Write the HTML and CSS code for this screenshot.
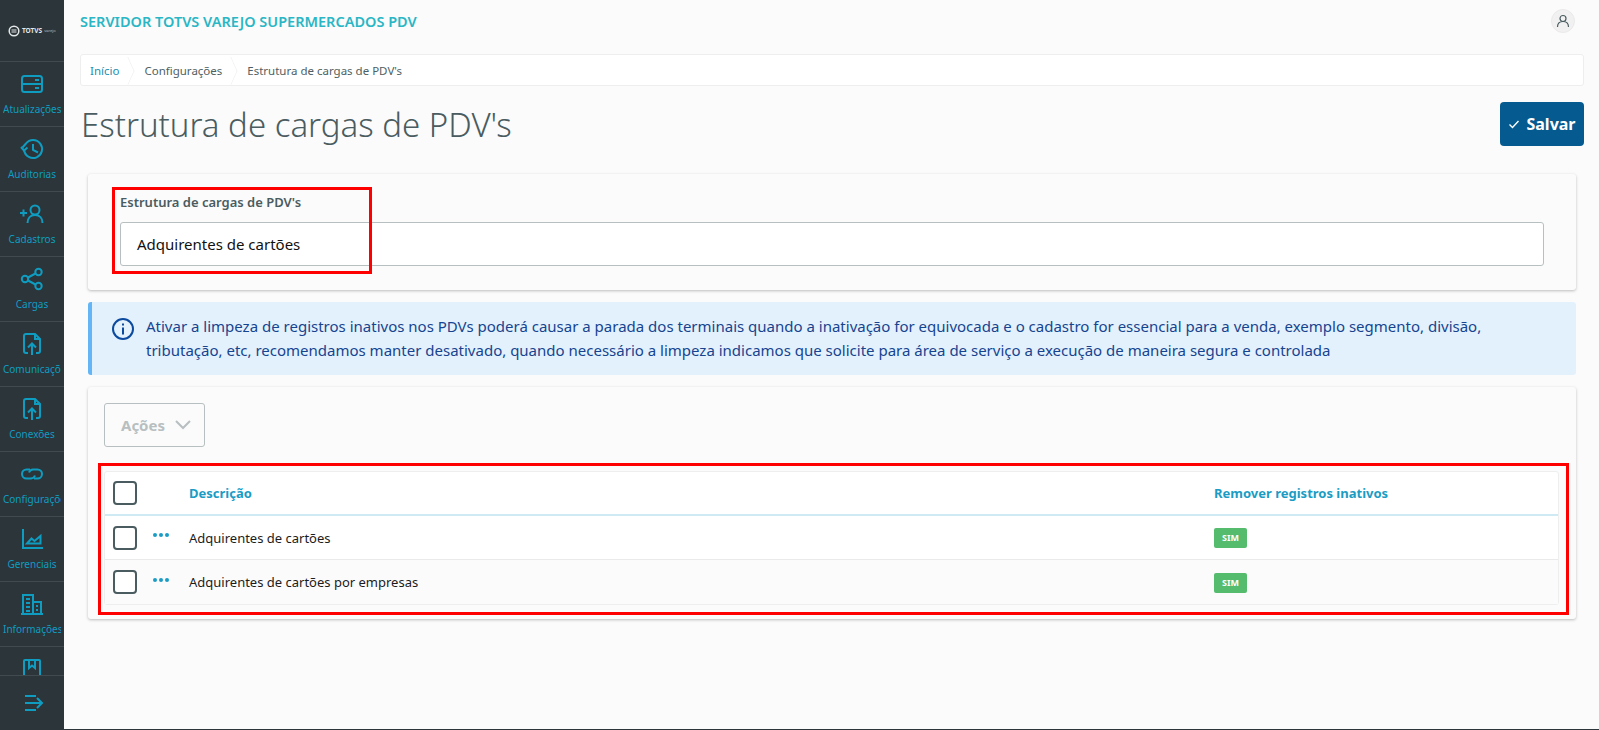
FILE: index.html
```html
<!DOCTYPE html>
<html lang="pt-BR">
    <head>
        <meta charset="UTF-8" />
        <title>Estrutura de cargas de PDV's</title>
        <link rel="stylesheet" href="styles.css">
    </head>
    <body>
        <aside class="sidebar">
            <div class="brand">
                <svg width="12" height="12" viewBox="0 0 12 12" fill="none" stroke="#e4e8e8">
                    <circle cx="6" cy="6" r="4.8" stroke-width="1.5" />
                    <path d="M3.5 5h5M3.5 7h5" stroke-width="1" />
                </svg>
                <span class="brand-name">TOTVS</span>
                <span class="brand-sub">varejo</span>
            </div>
            <nav class="menu">
                <a class="menu-item">
                    <svg class="menu-icon" viewBox="0 0 24 24">
                        <rect x="2" y="4" width="20" height="16" rx="2.5" />
                        <path d="M2 12h20M15 8h4M15 16h4" />
                    </svg>
                    <span>Atualizações</span>
                </a>
                <a class="menu-item">
                    <svg class="menu-icon" viewBox="0 0 24 24">
                        <path d="M4.2 13.5A9 9 0 1 0 6 6.5L2.5 10.5" />
                        <path d="M1 10l3 3.5 3.5-3" />
                        <path d="M13 7v6l5 2.5" />
                    </svg>
                    <span>Auditorias</span>
                </a>
                <a class="menu-item">
                    <svg class="menu-icon" viewBox="0 0 24 24">
                        <circle cx="15" cy="8" r="4.5" />
                        <path d="M7.5 21c0-5 3-8 7.500-8s7.500 3 7.500 8" />
                        <path d="M0 11h7M3.500 7.500v7" />
                    </svg>
                    <span>Cadastros</span>
                </a>
                <a class="menu-item">
                    <svg class="menu-icon" viewBox="0 0 24 24">
                        <circle cx="5" cy="12" r="3.200" />
                        <circle cx="18.500" cy="5" r="3.200" />
                        <circle cx="18.500" cy="19" r="3.200" />
                        <path d="M8 10.500l7.500-4M8 13.500l7.500 4" />
                    </svg>
                    <span>Cargas</span>
                </a>
                <a class="menu-item">
                    <svg class="menu-icon" viewBox="0 0 24 24">
                        <path d="M8 21H6a2 2 0 0 1-2-2V4a2 2 0 0 1 2-2h9l5 5v12a2 2 0 0 1-2 2h-2" />
                        <path d="M15 2v5h5" />
                        <path d="M12 23V12M8 15.500l4-4 4 4" />
                    </svg>
                    <span>Comunicações</span>
                </a>
                <a class="menu-item">
                    <svg class="menu-icon" viewBox="0 0 24 24">
                        <path d="M8 21H6a2 2 0 0 1-2-2V4a2 2 0 0 1 2-2h9l5 5v12a2 2 0 0 1-2 2h-2" />
                        <path d="M15 2v5h5" />
                        <path d="M12 23V12M8 15.500l4-4 4 4" />
                    </svg>
                    <span>Conexões</span>
                </a>
                <a class="menu-item">
                    <svg class="menu-icon" viewBox="0 0 24 24">
                        <path d="M10 7.500H6.500a4.500 4.500 0 0 0 0 9H11a4.500 4.500 0 0 0 4-3" />
                        <path d="M14 16.500h3.500a4.500 4.500 0 0 0 0-9H13a4.500 4.500 0 0 0-4 3" />
                    </svg>
                    <span>Configurações</span>
                </a>
                <a class="menu-item">
                    <svg class="menu-icon" viewBox="0 0 24 24">
                        <path d="M3 2v19h20" />
                        <path d="M7 16.500l4.500-5 3 2.500 6-5v7.500z" />
                    </svg>
                    <span>Gerenciais</span>
                </a>
                <a class="menu-item">
                    <svg class="menu-icon" viewBox="0 0 24 24">
                        <path d="M3 22V3h10v19M13 10h8v12M1 22h22" />
                        <path d="M6 7h4M6 11h4M6 15h4M6 19h4M16 14h2M16 18h2" />
                    </svg>
                    <span>Informações</span>
                </a>
                <a class="menu-item">
                    <svg class="menu-icon" viewBox="0 0 24 24">
                        <rect x="4" y="3" width="16" height="19" rx="1" />
                        <path d="M9 3v8l3-2.500 3 2.500V3" />
                    </svg>
                    <span>Ajuda</span>
                </a>
            </nav>
            <div class="collapse">
                <svg width="22" height="22" viewBox="0 0 22 22" fill="none" stroke="#0f9cc1" stroke-width="2">
                    <path d="M2 4h11M2 11h17M2 18h11M14 6l5 5-5 5" />
                </svg>
            </div>
        </aside>

        <div class="page">
            <header class="topbar">
                <span class="app-title">SERVIDOR TOTVS VAREJO SUPERMERCADOS PDV</span>
                <span class="avatar">
                    <svg width="14" height="14" viewBox="0 0 14 14" fill="none" stroke="#4a5c60" stroke-width="1.200">
                        <circle cx="7" cy="4.500" r="3" />
                        <path d="M1.500 13c0-3.500 2-5.500 5.500-5.500s5.500 2 5.500 5.500" />
                    </svg>
                </span>
            </header>

            <ol class="breadcrumb">
                <li class="crumb crumb-link">Início</li>
                <li class="crumb">Configurações</li>
                <li class="crumb crumb-last">Estrutura de cargas de PDV's</li>
            </ol>

            <div class="page-head">
                <h1>Estrutura de cargas de PDV's</h1>
                <button class="btn-save">
                    <svg width="12" height="12" viewBox="0 0 12 12" fill="none" stroke="#fff" stroke-width="1.400">
                        <path d="M1.500 6.500l3 3 6-6.500" />
                    </svg>
                    Salvar
                </button>
            </div>

            <section class="card card-form">
                <label class="field-label">Estrutura de cargas de PDV's</label>
                <div class="select">Adquirentes de cartões</div>
                <div class="mark mark-field"></div>
            </section>

            <div class="info">
                <svg class="info-icon" width="24" height="24" viewBox="0 0 24 24" fill="none" stroke="#0b4a9e" stroke-width="2">
                    <circle cx="12" cy="12" r="10" />
                    <path d="M12 10.500v7" />
                    <path d="M12 6.500v2" />
                </svg>
                <p>Ativar a limpeza de registros inativos nos PDVs poderá causar a parada dos terminais quando a inativação for equivocada e o cadastro for essencial para a venda, exemplo segmento, divisão, tributação, etc, recomendamos manter desativado, quando necessário a limpeza indicamos que solicite para área de serviço a execução de maneira segura e controlada</p>
            </div>

            <section class="card card-list">
                <button class="btn-actions">
                    Ações
                    <svg width="16" height="10" viewBox="0 0 16 10" fill="none" stroke="#b8bfc1" stroke-width="2">
                        <path d="M1 1l7 7 7-7" />
                    </svg>
                </button>
                <div class="table-wrap">
                    <div class="table">
                        <div class="row row-head">
                            <span class="check"></span>
                            <span class="cell-menu"></span>
                            <span class="cell-desc">Descrição</span>
                            <span class="cell-flag">Remover registros inativos</span>
                        </div>
                        <div class="row">
                            <span class="check"></span>
                            <span class="cell-menu"><i></i><i></i><i></i></span>
                            <span class="cell-desc">Adquirentes de cartões</span>
                            <span class="cell-flag"><b class="badge">SIM</b></span>
                        </div>
                        <div class="row row-alt">
                            <span class="check"></span>
                            <span class="cell-menu"><i></i><i></i><i></i></span>
                            <span class="cell-desc">Adquirentes de cartões por empresas</span>
                            <span class="cell-flag"><b class="badge">SIM</b></span>
                        </div>
                    </div>
                    <div class="mark mark-table"></div>
                </div>
            </section>
        </div>
    </body>
</html>
```

FILE: styles.css
```css
*,
*::before,
*::after {
    box-sizing: border-box;
    margin: 0;
    padding: 0;
}

body {
    display: flex;
    height: 730px;
    overflow: hidden;
    background: #fbfbfb;
    border-bottom: 1px solid #2c3539;
    font-family: "Noto Sans", "Open Sans", sans-serif;
    color: #1c1c1c;
}

/* sidebar */
.sidebar {
    display: flex;
    flex-direction: column;
    flex: none;
    width: 64px;
    background: #2c3539;
}

.brand {
    display: flex;
    align-items: center;
    gap: 2px;
    flex: none;
    height: 62px;
    padding-left: 8px;
    color: #e4e8e8;
    border-bottom: 1px solid #414b4f;
}

.brand-name {
    font-size: 6.5px;
    font-weight: 700;
}

.brand-sub {
    font-size: 4px;
    opacity: 0.7;
}

.menu {
    flex: 1;
    overflow: hidden;
}

.menu-item {
    display: flex;
    flex-direction: column;
    align-items: center;
    height: 65px;
    padding: 10px 3px 0;
    border-bottom: 1px solid #414b4f;
    font-size: 10px;
    color: #0f9cc1;
}

.menu-item > span {
    align-self: stretch;
    overflow: hidden;
    margin-top: 6px;
    line-height: 14px;
    text-align: center;
    white-space: nowrap;
}

.menu-icon {
    flex: none;
    width: 24px;
    height: 24px;
    fill: none;
    stroke: #0f9cc1;
    stroke-width: 2;
}

.collapse {
    display: flex;
    align-items: center;
    justify-content: center;
    flex: none;
    height: 54px;
    border-top: 1px solid #414b4f;
    padding-left: 3px;
}

/* main column */
.page {
    flex: 1;
    min-width: 0;
    padding: 0 15px 0 16px;
}

.topbar {
    display: flex;
    align-items: center;
    justify-content: space-between;
    height: 42px;
    padding-right: 9px;
}

.app-title {
    font-size: 14.5px;
    font-weight: 600;
    color: #29b6c5;
}

.avatar {
    display: flex;
    align-items: center;
    justify-content: center;
    width: 24px;
    height: 24px;
    border: 1px solid #eaeaea;
    border-radius: 50%;
    background: #f1f1f1;
}

.breadcrumb {
    display: flex;
    align-items: center;
    height: 32px;
    margin-top: 12px;
    padding-left: 9px;
    list-style: none;
    background: #fff;
    border: 1px solid #eee;
    border-radius: 3px;
    overflow: hidden;
    font-size: 11.5px;
    color: #4f5f63;
}

.crumb {
    position: relative;
    padding-right: 25px;
}

.crumb:not(.crumb-last)::after {
    content: "";
    position: absolute;
    top: -2px;
    right: 6px;
    width: 20px;
    height: 20px;
    border-top: 1px solid #eee;
    border-right: 1px solid #eee;
    transform: scaleX(0.45) rotate(45deg);
}

.crumb-link {
    color: #1b8fb0;
}

.page-head {
    display: flex;
    align-items: flex-start;
    justify-content: space-between;
    height: 88px;
    padding-top: 16px;
}

h1 {
    font-size: 33px;
    font-weight: 300;
    line-height: 46px;
    padding-left: 1px;
    color: #4a5c60;
}

.btn-save {
    display: flex;
    align-items: center;
    justify-content: center;
    gap: 6px;
    width: 84px;
    height: 44px;
    border: 0;
    border-radius: 4px;
    background: #055a8f;
    color: #fff;
    font: 700 16px "Noto Sans", sans-serif;
}

.card {
    position: relative;
    margin: 0 8px;
    background: #fbfbfb;
    border-radius: 3px;
    box-shadow: 0 1px 3px rgba(0, 0, 0, 0.25);
}

.card-form {
    height: 116px;
    padding: 19px 32px 0;
}

.field-label {
    display: block;
    font-size: 13px;
    font-weight: 600;
    line-height: 18px;
    color: #4a5c60;
}

.select {
    height: 44px;
    margin-top: 11px;
    padding-left: 16px;
    background: #fff;
    border: 1px solid #b8bfc1;
    border-radius: 3px;
    font-size: 15px;
    line-height: 42px;
    color: #111;
}

/* red annotation boxes drawn over the screenshot */
.mark {
    position: absolute;
    border: 3px solid #f00;
    pointer-events: none;
}

.mark-field {
    top: 13px;
    left: 24px;
    width: 260px;
    height: 87px;
}

.mark-table {
    inset: -8px -10px -10px -6px;
}

.info {
    display: flex;
    gap: 11px;
    height: 73px;
    margin: 12px 8px;
    padding: 12px 16px 0 19px;
    background: #e3f1fd;
    border-left: 4px solid #64b5f6;
    border-radius: 3px;
    font-size: 15px;
    line-height: 24px;
    color: #16448f;
}

.info-icon {
    flex: none;
    margin-top: 3px;
}

.card-list {
    height: 232px;
    padding: 16px 17px 0 16px;
}

.btn-actions {
    display: flex;
    align-items: center;
    gap: 10px;
    width: 101px;
    height: 44px;
    padding-left: 16px;
    background: transparent;
    border: 1px solid #b8bfc1;
    border-radius: 3px;
    color: #b8bfc1;
    font: 700 15px "Noto Sans", sans-serif;
}

.table-wrap {
    position: relative;
    margin-top: 24px;
}

.table {
    background: #fff;
    border: 1px solid #eee;
    border-radius: 3px;
}

.row {
    display: flex;
    align-items: center;
    height: 44px;
    padding-left: 8px;
    border-bottom: 1px solid #eaeaea;
    font-size: 13px;
}

.row:last-child {
    border-bottom: 0;
}

.row-alt {
    background: #fbfbfb;
}

.row-head {
    border-bottom: 2px solid #cfeaf3;
    font-weight: 700;
    color: #1a9cc4;
}

.check {
    flex: none;
    width: 24px;
    height: 24px;
    background: #fff;
    border: 2px solid #4a5c60;
    border-radius: 4px;
}

.cell-menu {
    display: flex;
    gap: 2px;
    flex: none;
    width: 52px;
    padding: 0 0 5px 16px;
}

.cell-menu > i {
    width: 4px;
    height: 4px;
    border-radius: 50%;
    background: #1a9cc4;
}

.cell-desc {
    flex: 1;
}

.cell-flag {
    flex: none;
    width: 344px;
}

.badge {
    display: inline-block;
    width: 33px;
    height: 20px;
    background: #55bb6d;
    border-radius: 2px;
    color: #fff;
    font-size: 9px;
    font-weight: 700;
    line-height: 20px;
    text-align: center;
}
```
